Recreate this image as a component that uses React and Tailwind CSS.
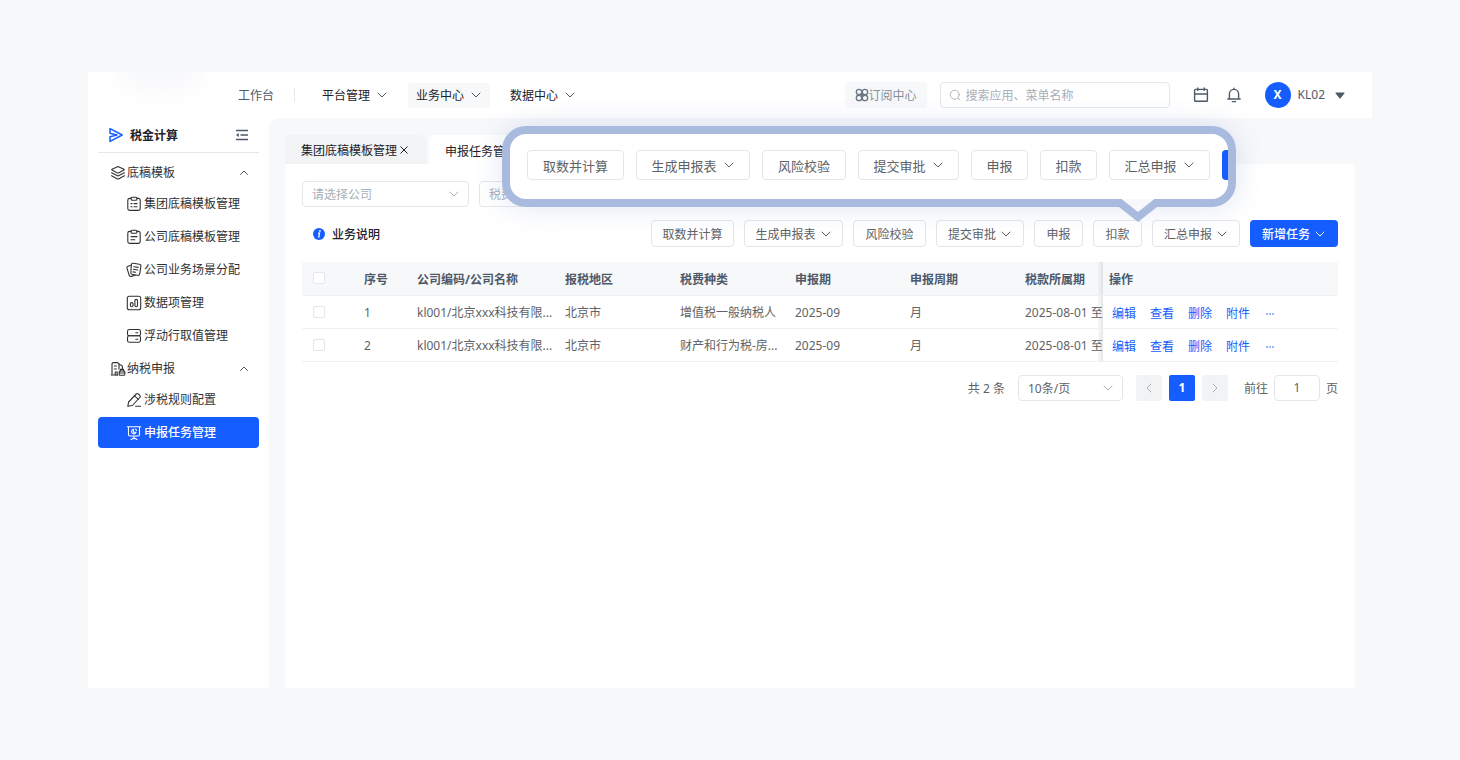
import React from "react";

function Chevron({ className = "", up = false }) {
  return (
    <svg viewBox="0 0 12 12" className={"h-3 w-3 shrink-0 " + className} fill="none" stroke="currentColor" strokeLinecap="round" strokeLinejoin="round" aria-hidden="true">
      <path d={up ? "M2.500 7.500 6 4 9.500 7.500" : "M2 4 6 8 10 4"} />
    </svg>
  );
}

function Icon({ children, className = "h-4 w-4", width = 1.1 }) {
  return (
    <svg viewBox="0 0 16 16" className={"shrink-0 " + className} fill="none" stroke="currentColor" strokeWidth={width} strokeLinecap="round" strokeLinejoin="round" aria-hidden="true">
      {children}
    </svg>
  );
}

const icons = {
  layers: (
    <>
      <path d="M7.500 1.700a1.200 1.200 0 0 1 1 0l5.500 2.500a.5.5 0 0 1 0 .9L8.500 7.900a1.200 1.200 0 0 1-1 0L2 5.100a.5.5 0 0 1 0-.9Z" />
      <path d="M1.600 7.700 7.500 10.800a1.200 1.200 0 0 0 1 0L14.400 7.700" />
      <path d="M1.600 10.700 7.500 13.900a1.200 1.200 0 0 0 1 0L14.400 10.700" />
    </>
  ),
  checklist: (
    <>
      <path d="M5 2.400H3.600A1.800 1.800 0 0 0 1.800 4.200v8.400a1.800 1.800 0 0 0 1.800 1.800h8.800a1.800 1.800 0 0 0 1.800-1.800V4.200a1.800 1.800 0 0 0-1.800-1.800H11" />
      <rect x="5" y="1.200" width="6" height="3" rx="1.300" />
      <path d="M4.900 7.600h1.200M8 7.600h3.100M4.900 10.800h1.200M8 10.800h3.100" />
    </>
  ),
  clipboard: (
    <>
      <path d="M5 2.400H3.600A1.800 1.800 0 0 0 1.800 4.200v8.400a1.800 1.800 0 0 0 1.800 1.800h8.800a1.800 1.800 0 0 0 1.800-1.800V4.200a1.800 1.800 0 0 0-1.800-1.800H11" />
      <rect x="5" y="1.200" width="6" height="3" rx="1.300" />
      <path d="M5 7.600h6M5 10.800h3.800" />
    </>
  ),
  cards: (
    <>
      <path d="M7.200 1.300 13.400 2.200a1.700 1.700 0 0 1 1.500 2l-1.200 7.700a1.700 1.700 0 0 1-2 1.400l-5.400-.8a1.700 1.700 0 0 1-1.400-2L5.300 2.700a1.700 1.700 0 0 1 1.900-1.400Z" />
      <path d="M5 3.200 2 4.200a1.500 1.500 0 0 0-1 1.900l2.200 7.200a1.600 1.600 0 0 0 2 1.100l4-1.200" />
      <path d="M7.800 4.700l4.400.7M7.400 7.300l4.400.7M7 9.900l2.600.4" />
    </>
  ),
  chart: (
    <>
      <rect x="1.300" y="1.300" width="13.400" height="13.400" rx="2" />
      <rect x="4.400" y="7.600" width="2.600" height="4.200" rx="1.200" />
      <rect x="8.900" y="4.400" width="2.600" height="7.400" rx="1.200" />
    </>
  ),
  rows: (
    <>
      <rect x="1.500" y="1.500" width="13" height="6.300" rx="1.900" />
      <rect x="1.500" y="7.800" width="13" height="6.500" rx="1.900" />
      <path d="M9.800 4.700h2M9.800 11.200h2" />
    </>
  ),
  building: (
    <>
      <path d="M7.600 14H2V3a1.400 1.400 0 0 1 1.400-1.400h4.200L9.600 3.500l2 .9a1.200 1.200 0 0 1 .8 1.100v2.300M9 3.600v4.500M1.200 14h6.600" />
      <path d="M4.400 5h2M4.400 8h2M5.200 14v-3h2V14" />
      <rect x="9.200" y="10" width="5.600" height="4.200" rx=".8" />
      <path d="M10.500 10V8.400h3V10M9.300 12h5.400" />
    </>
  ),
  pencil: (
    <>
      <path d="M10.200 2a1.500 1.500 0 0 1 2.100 0l1.500 1.400a1.500 1.500 0 0 1 0 2.100l-7.400 8-4.600.8.800-4.300Z" />
      <path d="m8.600 3.800 3.700 3.500M9.600 14.300h5" />
    </>
  ),
  board: (
    <>
      <path d="M1.300 1.800h13.400M2.500 1.800v7.700a1.500 1.500 0 0 0 1.500 1.500h8a1.500 1.500 0 0 0 1.500-1.500V1.800M8 11v2.700M5 14.400 8 13l3 1.400" />
      <path d="M7.400 4.300a2.300 2.300 0 1 0 2.700 2.900H7.400Z" />
      <path d="M9.200 4a1.900 1.900 0 0 1 1.400 1.400" />
    </>
  ),
};

function MenuGroup({ icon, label }) {
  return (
    <button type="button" className="flex h-[31px] w-full items-center gap-px pr-[9px] pl-3 text-[#303133]">
      <Icon>{icons[icon]}</Icon>
      <span>{label}</span>
      <Chevron up className="ml-auto text-[#4e5969]" />
    </button>
  );
}

function MenuItem({ icon, label, active }) {
  return (
    <a
      href="#"
      className={
        "mb-0.5 flex h-[31px] items-center gap-0.5 rounded pl-7 " +
        (active ? "bg-[#165dff] font-medium text-white" : "text-[#303133]")
      }
    >
      <Icon>{icons[icon]}</Icon>
      <span>{label}</span>
    </a>
  );
}

const sidebar = [
  {
    icon: "layers",
    label: "底稿模板",
    items: [
      ["checklist", "集团底稿模板管理"],
      ["clipboard", "公司底稿模板管理"],
      ["cards", "公司业务场景分配"],
      ["chart", "数据项管理"],
      ["rows", "浮动行取值管理"],
    ],
  },
  {
    icon: "building",
    label: "纳税申报",
    items: [
      ["pencil", "涉税规则配置"],
      ["board", "申报任务管理"],
    ],
  },
];

function Sidebar() {
  return (
    <aside className="w-[181px] shrink-0 bg-white px-[10px]">
      <div className="flex h-[35px] items-center border-b border-[#e5e6eb] pr-[10px] pl-[10px]">
        <svg viewBox="0 0 16 16" className="h-4 w-4 text-[#165dff]" fill="none" stroke="currentColor" strokeWidth="1.500" strokeLinejoin="round" aria-hidden="true">
          <path d="M2 1.600 14.200 8 2 14.400V9.700L9 8 2 6.300Z" />
        </svg>
        <h2 className="ml-1.5 pt-0.5 font-bold text-[#1d2129]">税金计算</h2>
        <button type="button" aria-label="收起菜单" className="ml-auto text-[#4e5969]">
          <svg viewBox="0 0 14 14" className="h-3.5 w-3.5" fill="none" stroke="currentColor" strokeWidth="1.300" aria-hidden="true">
            <path d="M1 2.500h12M5.500 7H13M1 11.500h12" />
            <path d="M1 7l2.800-2v4Z" fill="currentColor" stroke="none" />
          </svg>
        </button>
      </div>
      <nav className="pt-1">
        {sidebar.map((g) => (
          <div key={g.label}>
            <MenuGroup icon={g.icon} label={g.label} />
            {g.items.map(([icon, label]) => (
              <MenuItem key={label} icon={icon} label={label} active={label === "申报任务管理"} />
            ))}
          </div>
        ))}
      </nav>
    </aside>
  );
}

function Header() {
  return (
    <header className="relative flex h-[46px] items-center overflow-hidden bg-white pr-[27px] pl-[150px] text-[#1d2129]">
      <div className="absolute -top-5 left-7 h-10 w-[86px] rounded-[50%] bg-[#f7f8fa] blur-md" />
      <a href="#" className="pt-0.5 text-[#4e5969]">工作台</a>
      <span className="ml-5 h-3.5 w-px bg-[#e5e6eb]" />
      <nav className="ml-[19px] flex items-center gap-3">
        {["平台管理", "业务中心", "数据中心"].map((t) => (
          <button
            key={t}
            type="button"
            className={"flex h-[25px] items-center gap-1.5 rounded px-2 " + (t === "业务中心" ? "bg-[#f7f8fa]" : "")}
          >
            <span className="pt-0.5">{t}</span>
            <Chevron className="text-[#4e5969]" />
          </button>
        ))}
      </nav>
      <button type="button" className="ml-auto flex h-[26px] w-[82px] items-center justify-center rounded bg-[#f7f8fa] text-[#86909c]">
        <Icon className="h-3.5 w-3.5 text-[#6b7785]" width={1.500}>
          <circle cx="4.600" cy="4.600" r="3.100" />
          <circle cx="11.400" cy="4.600" r="3.100" />
          <circle cx="4.600" cy="11.400" r="3.100" />
          <circle cx="11.400" cy="11.400" r="3.100" />
          <path d="M6.900 6.900l2.200 2.200M9.100 6.900 6.900 9.100" />
        </Icon>
        <span className="pt-0.5">订阅中心</span>
      </button>
      <label className="ml-[13px] flex h-[26px] w-[230px] items-center gap-[5px] rounded border border-[#e5e6eb] px-2">
        <Icon className="h-3 w-3 text-[#a9aeb8]" width={1.200}>
          <circle cx="7.600" cy="7.600" r="6" />
          <path d="m12.200 12.200 2.400 2.400" />
        </Icon>
        <input type="search" aria-label="搜索" placeholder="搜索应用、菜单名称" className="min-w-0 flex-1 pt-0.5 outline-none placeholder:text-[#a9aeb8]" />
      </label>
      <button type="button" aria-label="日历" className="ml-[23px] text-[#4e5969]">
        <Icon width={1.400}>
          <rect x="1.600" y="2.400" width="12.800" height="11.800" rx=".8" />
          <path d="M1.600 7h12.800M4.800 1v2.400M11.200 1v2.400" />
        </Icon>
      </button>
      <button type="button" aria-label="通知" className="ml-[17px] text-[#4e5969]">
        <Icon width={1.400}>
          <path d="M3.400 12V7a4.600 4.600 0 0 1 9.200 0v5M1.800 12h12.400M6.400 14.600h3.200M8 1.200v1.200" />
        </Icon>
      </button>
      <button type="button" className="ml-[23px] flex items-center text-[#4e5969]">
        <span className="flex h-[26px] w-[26px] items-center justify-center rounded-full bg-[#165dff] font-bold text-white">X</span>
        <span className="ml-[7px]">KL02</span>
        <svg viewBox="0 0 10 7" className="ml-2.5 h-[7px] w-2.5" fill="currentColor" aria-hidden="true">
          <path d="M1 .5h8a.6.6 0 0 1 .4 1L5.500 6.200a.7.7 0 0 1-1 0L.6 1.500a.6.6 0 0 1 .4-1Z" />
        </svg>
      </button>
    </header>
  );
}

function Select({ label, className, options }) {
  return (
    <span className={"relative flex h-[26px] items-center " + className}>
      <select aria-label={label} className="h-full w-full appearance-none rounded border border-[#e5e6eb] bg-white pt-0.5 pr-6 pl-[9px] outline-none">
        {options.map((o) => (
          <option key={o}>{o}</option>
        ))}
      </select>
      <Chevron className="pointer-events-none absolute right-[9px] text-[#a9aeb8]" />
    </span>
  );
}

const actions = [
  ["取数并计算", "w-[83px]", "w-[97px]", false],
  ["生成申报表", "w-[99px]", "w-[114px]", true],
  ["风险校验", "w-[73px]", "w-[84px]", false],
  ["提交审批", "w-[88px]", "w-[101px]", true],
  ["申报", "w-[49px]", "w-[57px]", false],
  ["扣款", "w-[49px]", "w-[57px]", false],
  ["汇总申报", "w-[88px]", "w-[101px]", true],
];

function ActionButton({ label, menu, className }) {
  return (
    <button type="button" className={"flex shrink-0 items-center justify-center rounded whitespace-nowrap " + className}>
      <span className="pt-0.5">{label}</span>
      {menu && <Chevron />}
    </button>
  );
}

function Toolbar() {
  return (
    <div className="mt-[13px] flex items-center">
      <svg viewBox="0 0 12 12" className="ml-[11px] h-3 w-3" aria-hidden="true">
        <circle cx="6" cy="6" r="6" fill="#165dff" />
        <circle cx="6.900" cy="3" r=".9" fill="#fff" />
        <path d="M5 5.200h1.500L5.700 9h1" fill="none" stroke="#fff" strokeWidth="1.200" />
      </svg>
      <span className="ml-[7px] pt-0.5 font-medium text-[#1d2129]">业务说明</span>
      <div className="ml-auto flex gap-2.5">
        {actions.map(([label, w, , menu]) => (
          <ActionButton
            key={label}
            label={label}
            menu={menu}
            className={"h-[27px] gap-1 border border-[#e5e6eb] bg-white text-[#606266] " + w}
          />
        ))}
        <ActionButton label="新增任务" menu className="h-[27px] w-[88px] gap-1 bg-[#165dff] font-medium text-white" />
      </div>
    </div>
  );
}

function Callout() {
  return (
    <div className="absolute top-2 left-[233px] h-[81px] w-[734px] rounded-[24px] shadow-[0_0_28px_rgba(80,110,190,0.18)]">
      <div className="flex h-full items-center gap-3 overflow-hidden rounded-[24px] border-8 border-[#a9badf] bg-white pb-[3px] pl-[17px] text-[13px] text-[#606266]">
        {actions.map(([label, , w, menu]) => (
          <ActionButton
            key={label}
            label={label}
            menu={menu}
            className={"h-[30px] gap-1.5 border border-[#e5e6eb] bg-white " + w}
          />
        ))}
        <span className="h-[30px] w-[101px] shrink-0 rounded bg-[#165dff]" />
      </div>
      <svg viewBox="0 0 44 23" className="absolute top-[73px] right-[76px] h-[23px] w-11" aria-hidden="true">
        <path d="M0 0H44L41 8 22 23 3 8Z" fill="#a9badf" />
        <path d="M5.500 0H38.500L22 13Z" fill="#f7f8fa" />
      </svg>
    </div>
  );
}

const columns = ["序号", "公司编码/公司名称", "报税地区", "税费种类", "申报期", "申报周期", "税款所属期"];
const rows = [
  ["1", "kl001/北京xxx科技有限...", "北京市", "增值税一般纳税人", "2025-09", "月", "2025-08-01 至"],
  ["2", "kl001/北京xxx科技有限...", "北京市", "财产和行为税-房...", "2025-09", "月", "2025-08-01 至"],
];
const fixedShadow =
  "relative before:absolute before:inset-y-0 before:-left-1.5 before:w-1.5 before:bg-linear-to-l before:from-black/10 before:to-transparent";

function Check({ label }) {
  return (
    <input
      type="checkbox"
      aria-label={label}
      className="block h-3 w-3 appearance-none rounded-xs border border-[#e5e6eb] bg-white checked:bg-[#165dff]"
    />
  );
}

function TaskTable() {
  return (
    <table className="mt-[15px] w-full table-fixed border-collapse text-left">
      <colgroup>
        <col className="w-[52px]" />
        <col className="w-[53px]" />
        <col className="w-[148px]" />
        <col className="w-[115px]" />
        <col className="w-[115px]" />
        <col className="w-[115px]" />
        <col className="w-[115px]" />
        <col className="w-[88px]" />
        <col className="w-[235px]" />
      </colgroup>
      <thead>
        <tr className="h-[33px] border-b border-[#eff0f3] text-[#4e5969]">
          <th className="bg-[#f7f8fa] pl-[11px]"><Check label="全选" /></th>
          {columns.map((c) => (
            <th key={c} className="bg-[#f7f8fa] pt-[3px] pl-2.5 font-bold whitespace-nowrap">{c}</th>
          ))}
          <th className={"bg-[#f7f8fa] pt-[3px] pl-1.5 font-bold " + fixedShadow}>操作</th>
        </tr>
      </thead>
      <tbody>
        {rows.map((r) => (
          <tr key={r[0]} className="h-[33px] border-b border-[#eff0f3] text-[#606266]">
            <td className="pl-[11px]"><Check label={"选择第" + r[0] + "行"} /></td>
            {r.map((v, i) => (
              <td key={i} className="pt-[3px] pl-2.5 whitespace-nowrap">
                {v}
              </td>
            ))}
            <td className={"bg-white pt-[5px] pl-[9px] " + fixedShadow}>
              <div className="flex gap-3.5 text-[#165dff]">
                <a href="#">编辑</a>
                <a href="#">查看</a>
                <a href="#">删除</a>
                <a href="#">附件</a>
                <button type="button" aria-label="更多" className="flex items-center pl-0.5">
                  <svg viewBox="0 0 8 2" className="h-0.5 w-2" fill="currentColor" aria-hidden="true">
                    <circle cx="1" cy="1" r=".8" />
                    <circle cx="4" cy="1" r=".8" />
                    <circle cx="7" cy="1" r=".8" />
                  </svg>
                </button>
              </div>
            </td>
          </tr>
        ))}
      </tbody>
    </table>
  );
}

function Pagination() {
  return (
    <div className="mt-[13px] flex items-center justify-end text-[#606266]">
      <span className="pt-0.5">共 2 条</span>
      <Select label="每页条数" className="ml-[13px] w-[105px]" options={["10条/页", "20条/页", "50条/页"]} />
      <div className="ml-[13px] flex gap-[7px]">
        <button type="button" aria-label="上一页" disabled className="flex h-[26px] w-[26px] items-center justify-center rounded-xs bg-[#f2f3f5] text-[#a9aeb8]">
          <Chevron className="rotate-90" />
        </button>
        <button type="button" className="h-[26px] w-[26px] rounded-xs bg-[#165dff] font-bold text-white">1</button>
        <button type="button" aria-label="下一页" disabled className="flex h-[26px] w-[26px] items-center justify-center rounded-xs bg-[#f2f3f5] text-[#a9aeb8]">
          <Chevron className="-rotate-90" />
        </button>
      </div>
      <label className="ml-4 flex items-center gap-1.5">
        <span className="pt-0.5">前往</span>
        <input type="text" defaultValue="1" className="h-[26px] w-[46px] rounded border border-[#e5e6eb] text-center outline-none" />
        <span className="pt-0.5">页</span>
      </label>
    </div>
  );
}

export default function App() {
  return (
    <div className="flex min-h-screen flex-col bg-[#f7f8fa] px-[88px] py-[72px] font-['Noto_Sans','Noto_Sans_CJK_SC',sans-serif] text-[12px] leading-4">
      <Header />
      <div className="flex flex-1 bg-white">
        <Sidebar />
        <main className="relative flex min-w-0 flex-1 flex-col rounded-tl-[10px] bg-[#f7f8fa] pt-[17px] pr-[17px] pl-4">
          <div className="flex h-[29px] gap-[3px] text-[#1d2129]">
            <div className="flex w-[141px] items-center gap-0.5 rounded-t-md bg-[#f2f3f5] pl-4 whitespace-nowrap">
              <a href="#" className="pt-0.5">集团底稿模板管理</a>
              <button type="button" aria-label="关闭">
                <svg viewBox="0 0 10 10" className="h-2.5 w-2.5" fill="none" stroke="currentColor" aria-hidden="true">
                  <path d="m1.500 1.500 7 7M8.500 1.500l-7 7" />
                </svg>
              </button>
            </div>
            <div className="flex w-[118px] items-center rounded-t-md bg-white pt-[5px] pl-4 whitespace-nowrap">
              <a href="#">申报任务管理</a>
            </div>
          </div>
          <section className="flex-1 rounded-tr-md bg-white px-[17px] pt-[17px]">
            <div className="flex gap-2.5 text-[#a9aeb8]">
              <Select label="公司" className="w-[167px]" options={["请选择公司"]} />
              <Select label="税费种类" className="w-[167px]" options={["税费种类"]} />
            </div>
            <Toolbar />
            <TaskTable />
            <Pagination />
          </section>
          <Callout />
        </main>
      </div>
    </div>
  );
}
